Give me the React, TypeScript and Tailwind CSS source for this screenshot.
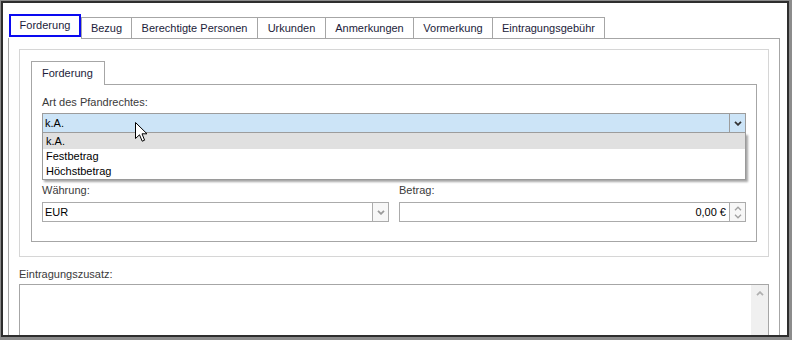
import React from 'react';

const tabs = [
  { label: 'Bezug', w: 'w-[51px] border-l' },
  { label: 'Berechtigte Personen', w: 'w-[126px]' },
  { label: 'Urkunden', w: 'w-[68px]' },
  { label: 'Anmerkungen', w: 'w-[88px]' },
  { label: 'Vormerkung', w: 'w-[79px]' },
  { label: 'Eintragungsgebühr', w: 'w-[112px]' },
];

const Chevron: React.FC<{ up?: boolean; color: string; bold?: boolean }> = ({ up, color, bold }) => (
  <svg width="8" height="5" viewBox="0 0 8 5">
    <path
      d={up ? 'M1 4.2 L4 1.2 L7 4.2' : 'M1 0.8 L4 3.8 L7 0.8'}
      fill="none"
      stroke={color}
      strokeWidth={bold ? 1.8 : 1.3}
    />
  </svg>
);

const App: React.FC = () => {
  return (
    <div className="w-[792px] h-[340px] flex bg-white border-t border-l border-r-[3px] border-b-[3px] border-[#8c8c8c] font-['Liberation_Sans',Arial,sans-serif] text-[11px] text-black">
      <div className="flex-1 border-2 border-[#2e2e2e] overflow-hidden pl-[5px] pr-[7px] pt-[11px]">
        {/* main tab strip */}
        <div className="flex items-start h-[24px] ml-[1px] relative z-10 text-[#1c1c3a]">
          <div className="w-[72px] h-[25px] bg-white">
            <div className="h-[23px] border-2 border-[#0a0af0] flex items-center justify-center">Forderung</div>
          </div>
          {tabs.map((t) => (
            <div
              key={t.label}
              className={`${t.w} mt-[3px] h-[21px] border-t border-r border-[#a6a6a6] flex items-center justify-center`}
            >
              {t.label}
            </div>
          ))}
        </div>

        <div className="border border-[#a6a6a6] h-[320px] px-[10px] pt-[10px] bg-white">
          {/* group box */}
          <div className="border border-[#d6d6d6] pt-[11px] px-[11px] pb-[14px]">
            <div className="w-[74px] h-[24px] border-t border-l border-r border-[#a6a6a6] bg-white relative z-10 -mb-px flex items-center pl-[10px] text-[#1c1c3a]">
              Forderung
            </div>
            <div className="border border-[#a6a6a6] px-[10px] pt-[11px] pb-[19px] text-[#3a3a3a]">
              <div className="leading-[13px] h-[13px] mb-[4px]">Art des Pfandrechtes:</div>
              <div className="relative h-[20px] border border-[#9c9c9c] bg-[#cce4f7] flex text-black">
                <div className="flex-1 pl-[2px] leading-[18px]">k.A.</div>
                <div className="w-[16px] border-l border-[#9c9c9c] flex items-center justify-center">
                  <Chevron color="#333333" bold />
                </div>
                <div className="absolute -left-px -right-px top-[19px] z-20 bg-white border-x border-b border-[#9a9a9a] shadow-[2px_2px_2px_rgba(0,0,0,0.35)]">
                  <div className="h-[16px] leading-[16px] pl-[3px] bg-[#e0e0e0]">k.A.</div>
                  <div className="h-[15px] leading-[15px] pl-[3px]">Festbetrag</div>
                  <div className="h-[15px] leading-[15px] pl-[3px]">Höchstbetrag</div>
                </div>
                <svg className="absolute left-[92px] top-[8px] z-30" width="13" height="21" viewBox="0 0 13 21">
                  <path
                    d="M0.5 0.5 L0.5 16.5 L4.5 12.8 L7.2 19.2 L9.6 18.2 L7 11.8 L12 11.8 Z"
                    fill="white"
                    stroke="black"
                    strokeWidth="1"
                    strokeLinejoin="miter"
                  />
                </svg>
              </div>

              <div className="grid grid-cols-2 gap-x-[10px] mt-[51px]">
                <div>
                  <div className="leading-[13px] h-[13px] mb-[5px]">Währung:</div>
                  <div className="h-[20px] border border-[#ababab] bg-white flex text-black">
                    <div className="flex-1 pl-[2px] leading-[18px]">EUR</div>
                    <div className="w-[16px] border-l border-[#ababab] bg-[#f7f7f7] flex items-center justify-center">
                      <Chevron color="#9a9a9a" bold />
                    </div>
                  </div>
                </div>
                <div>
                  <div className="leading-[13px] h-[13px] mb-[5px]">Betrag:</div>
                  <div className="h-[20px] border border-[#ababab] bg-white flex text-black">
                    <div className="flex-1 pr-[3px] leading-[18px] text-right">0,00 €</div>
                    <div className="w-[16px] border-l border-[#ababab] bg-[#f7f7f7] flex flex-col items-center justify-center gap-[3px]">
                      <Chevron up color="#a0a0a0" />
                      <Chevron color="#a0a0a0" />
                    </div>
                  </div>
                </div>
              </div>
            </div>
          </div>

          <div className="leading-[13px] h-[13px] mt-[11px] mb-[3px] text-[#3a3a3a]">Eintragungszusatz:</div>
          <div className="h-[80px] border border-[#a6a6a6] flex justify-end">
            <div className="w-[17px] bg-[#f0f0f0] flex justify-center pt-[6px]">
              <Chevron up color="#b0b0b0" bold />
            </div>
          </div>
        </div>
      </div>
    </div>
  );
};

export default App;
